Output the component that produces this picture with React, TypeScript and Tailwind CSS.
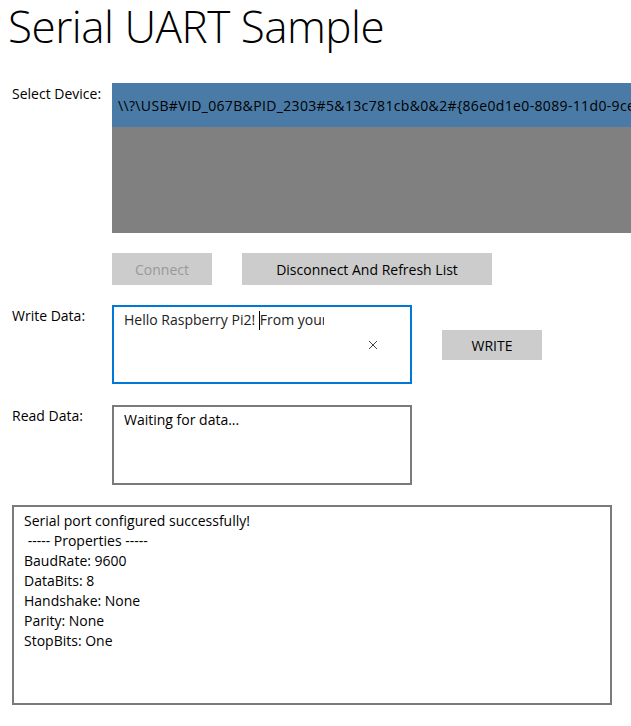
import React from "react";

const font = { fontFamily: '"Open Sans", "Noto Sans", sans-serif' };

export default function App() {
  return (
    <div className="w-[631px] h-[726px] bg-white text-black overflow-hidden" style={font}>
      <div className="flex items-start pl-[8px] h-[83px]">
        <h1 className="text-[44px] font-light leading-[58px] -mt-[3px] tracking-[-0.5px]">Serial UART Sample</h1>
      </div>

      {/* Select device */}
      <div className="flex">
        <div className="w-[112px] pl-[12px] pt-[1px] text-[14px] leading-[20px]">Select Device:</div>
        <div className="flex-1 h-[150px] bg-[#808080] overflow-hidden">
          <div className="h-[44px] bg-[#4a7ba6] flex items-center pl-[6px] text-[14px] whitespace-nowrap tracking-[0.35px]">
            \\?\USB#VID_067B&amp;PID_2303#5&amp;13c781cb&amp;0&amp;2#&#123;86e0d1e0-8089-11d0-9ce4-08003e301f73&#125;
          </div>
        </div>
      </div>

      {/* Buttons */}
      <div className="flex pl-[112px] mt-[20px] gap-[30px]">
        <div className="w-[100px] h-[32px] bg-[#cccccc] text-[#999999] text-[14px] flex items-center justify-center">Connect</div>
        <div className="w-[250px] h-[32px] bg-[#cccccc] text-[14px] flex items-center justify-center">Disconnect And Refresh List</div>
      </div>

      {/* Write data */}
      <div className="flex mt-[20px]">
        <div className="w-[112px] pl-[12px] pt-[1px] text-[14px] leading-[20px]">Write Data:</div>
        <div className="w-[300px] h-[79px] border-2 border-[#0078d7] flex">
          <div className="w-[200px] ml-[10px] pt-[3px] overflow-hidden whitespace-nowrap text-[14px] leading-[20px] text-[#222]">
            Hello Raspberry Pi2! <span className="inline-block w-px h-[19px] bg-black align-middle -mt-[2px]"></span>From your Windows 10 PC
          </div>
          <div className="w-[74px] flex items-center justify-center ml-[12px]">
            <svg width="10" height="10" viewBox="0 0 10 10">
              <path d="M1 1 L9 9 M9 1 L1 9" stroke="#444" strokeWidth="1" />
            </svg>
          </div>
        </div>
        <div className="ml-[30px] mt-[25px] w-[100px] h-[30px] bg-[#cccccc] text-[14px] flex items-center justify-center">WRITE</div>
      </div>

      {/* Read data */}
      <div className="flex mt-[21px]">
        <div className="w-[112px] pl-[12px] pt-[1px] text-[14px] leading-[20px]">Read Data:</div>
        <div className="w-[300px] h-[80px] border-2 border-[#7a7a7a] pl-[10px] pt-[3px] text-[14px] leading-[20px]">
          Waiting for data...
        </div>
      </div>

      {/* Status */}
      <div className="ml-[12px] mt-[20px] w-[600px] h-[200px] border-2 border-[#7a7a7a] pl-[10px] pt-[4px] text-[14px] leading-[20px]">
        <div>Serial port configured successfully!</div>
        <div>&nbsp;----- Properties -----</div>
        <div>BaudRate: 9600</div>
        <div>DataBits: 8</div>
        <div>Handshake: None</div>
        <div>Parity: None</div>
        <div>StopBits: One</div>
      </div>
    </div>
  );
}
